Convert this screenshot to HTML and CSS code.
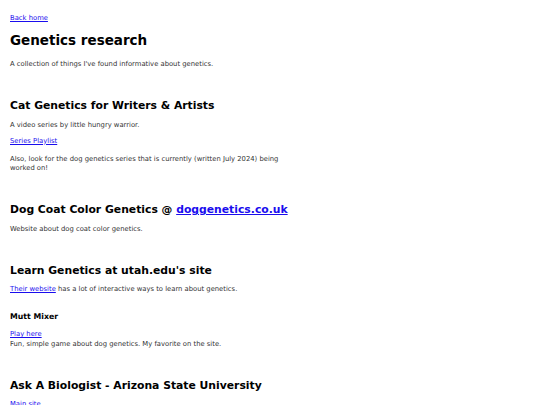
FILE: index.html
```html
<!DOCTYPE html>
<html>
<head>
<meta charset="utf-8">
<link rel="stylesheet" href="styles.css">
</head>
<body>
<main class="page">
  <p class="back"><a href="#">Back home</a></p>
  <h1>Genetics research</h1>
  <p>A collection of things I've found informative about genetics.</p>

  <section class="entry">
    <h2>Cat Genetics for Writers &amp; Artists</h2>
    <p>A video series by little hungry warrior.</p>
    <p class="linkline"><a href="#">Series Playlist</a></p>
    <p>Also, look for the dog genetics series that is currently (written July 2024) being worked on!</p>
  </section>

  <section class="entry">
    <h2>Dog Coat Color Genetics @ <a href="#">doggenetics.co.uk</a></h2>
    <p>Website about dog coat color genetics.</p>
  </section>

  <section class="entry">
    <h2>Learn Genetics at utah.edu's site</h2>
    <p><a href="#">Their website</a> has a lot of interactive ways to learn about genetics.</p>
    <h3>Mutt Mixer</h3>
    <p><a href="#">Play here</a><br>Fun, simple game about dog genetics. My favorite on the site.</p>
  </section>

  <section class="entry">
    <h2>Ask A Biologist - Arizona State University</h2>
    <p><a href="#">Main site</a></p>
  </section>
</main>
</body>
</html>
```
FILE: styles.css
```css
html, body {
  margin: 0;
  padding: 0;
  background: #fff;
}
body {
  font-family: "DejaVu Sans", Verdana, sans-serif;
  color: #333;
  font-size: 6.8px;
  line-height: 9.5px;
}
.page {
  padding: 7px 10px 0;
  max-width: 290px;
}
p {
  margin: 6.5px 0;
}
a {
  color: #1a0dee;
}
.linkline {
  margin-bottom: 8.5px;
}
h1 {
  font-size: 13.5px;
  line-height: 16px;
  margin: 9px 0 12px;
  color: #000;
}
h2 {
  font-size: 10.8px;
  line-height: 13px;
  margin: 29.5px 0 8.5px;
  color: #000;
}
h3 {
  font-size: 7.8px;
  line-height: 9.5px;
  margin: 17px 0 9px;
  color: #000;
}
```
